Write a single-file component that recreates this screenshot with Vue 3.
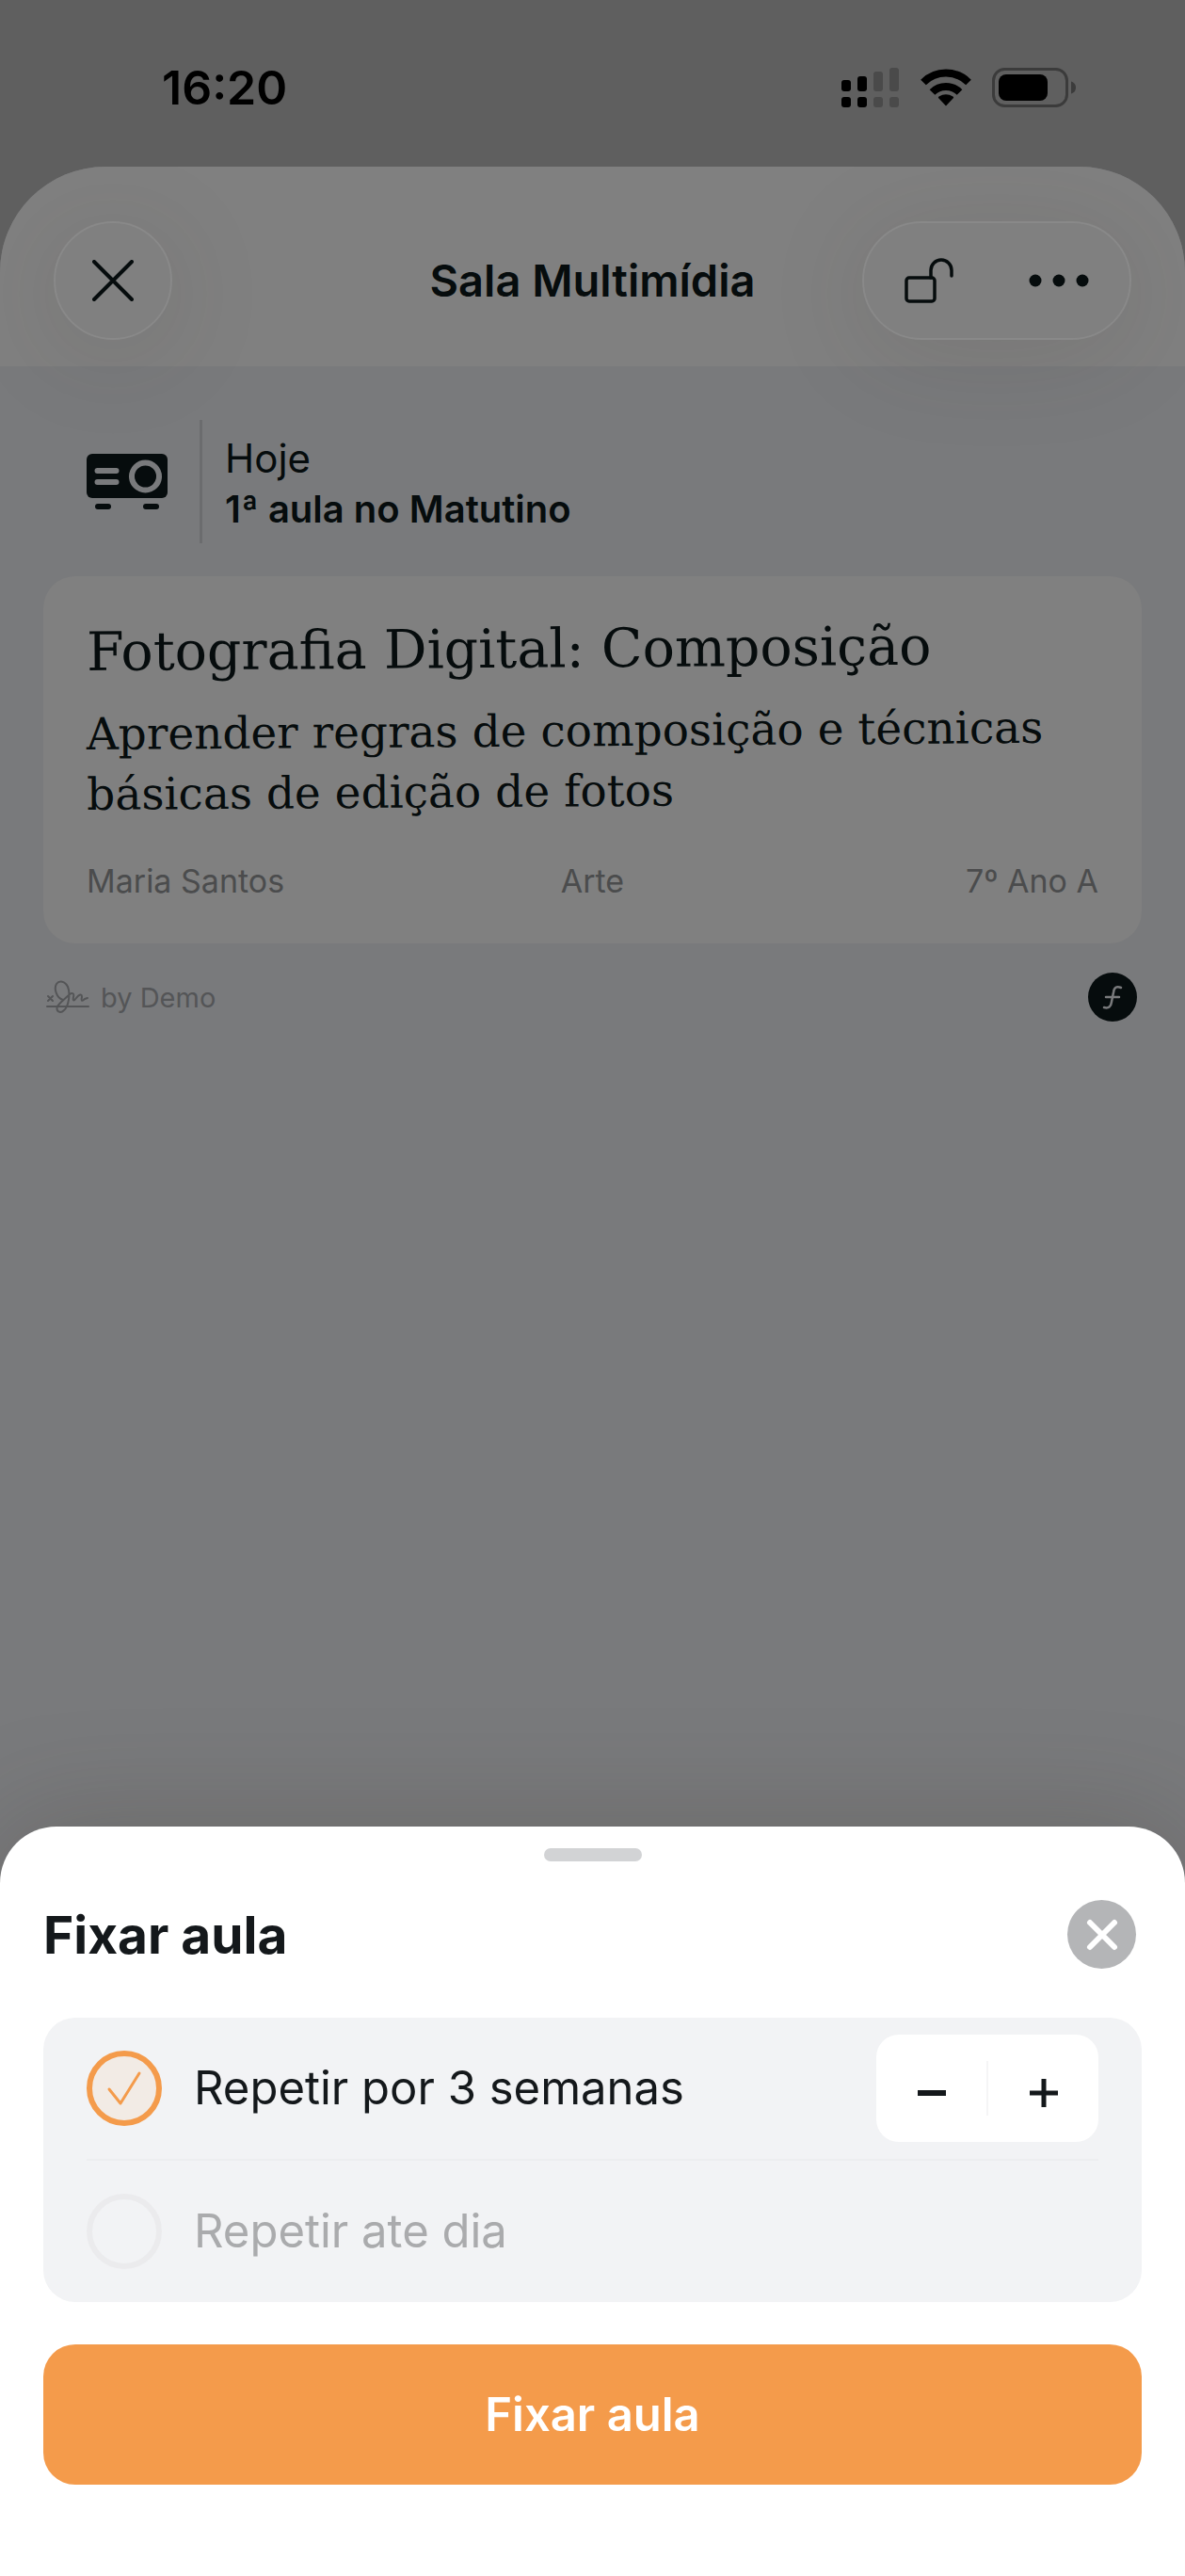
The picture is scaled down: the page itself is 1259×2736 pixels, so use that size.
<script setup>
import { ref } from 'vue'

const mode = ref('weeks')
const weeks = ref(3)
const bars = [
  { x: 0, h: 12, on: true },
  { x: 17, h: 16, on: true },
  { x: 34, h: 21, on: false },
  { x: 51, h: 25, on: false },
]
const meta = ['Maria Santos', 'Arte', '7º Ano A']

function changeWeeks(step) {
  weeks.value = Math.max(1, weeks.value + step)
}
</script>

<template>
  <div class="screen">
    <div class="status">
      <time class="clock">16:20</time>
      <div class="indicators">
        <svg width="62" height="44" viewBox="0 0 62 44" aria-hidden="true">
          <g v-for="bar in bars" :key="bar.x" :class="bar.on ? 'bar-on' : 'bar-off'">
            <rect :x="bar.x" :y="26 - bar.h" width="10" :height="bar.h" rx="3" />
            <rect :x="bar.x" y="32" width="10" height="11" rx="3" />
          </g>
        </svg>
        <svg class="wifi" width="54" height="40" viewBox="0 0 54 40" aria-hidden="true">
          <path d="M3 14.500A34 34 0 0 1 51 14.500" fill="none" stroke="#000" stroke-width="8" />
          <path d="M12.500 25A20.500 20.500 0 0 1 41.500 25" fill="none" stroke="#000" stroke-width="8" />
          <path d="M27 39.500L19 31Q18.500 30 19.500 29.500Q27 25 34.500 29.500Q35.500 30 35 31Z" />
        </svg>
        <svg class="battery" width="90" height="42" viewBox="0 0 90 42" aria-hidden="true">
          <rect x="1.500" y="1.500" width="78" height="39" rx="12" fill="none" stroke="#3b3b3b" stroke-width="3" />
          <rect x="7" y="7" width="52" height="28" rx="8" />
          <path d="M84 14.500Q89 16 89 21T84 27.500Z" fill="#3b3b3b" />
        </svg>
      </div>
    </div>

    <main class="page">
      <header class="topbar">
        <div class="side">
          <button class="glass round" type="button" aria-label="Fechar">
            <svg width="44" height="44" viewBox="0 0 44 44">
              <path d="M2 2L42 42M42 2L2 42" fill="none" stroke="#060c0d" stroke-width="4" stroke-linecap="round" />
            </svg>
          </button>
        </div>
        <h1 class="page-title">Sala Multimídia</h1>
        <div class="side end">
          <div class="glass pill">
            <button class="pill-button" type="button" aria-label="Desbloquear">
              <svg width="52" height="48" viewBox="0 0 52 48" fill="none" stroke="#060c0d" stroke-width="3.500">
                <rect x="2" y="21" width="30" height="25" rx="3" />
                <path d="M28 21V13A11 11 0 0 1 50 13V19" stroke-linecap="round" />
              </svg>
            </button>
            <button class="pill-button" type="button" aria-label="Mais opções">
              <svg width="64" height="14" viewBox="0 0 64 14" fill="#060c0d">
                <circle cx="7" cy="7" r="6.500" />
                <circle cx="32" cy="7" r="6.500" />
                <circle cx="57" cy="7" r="6.500" />
              </svg>
            </button>
          </div>
        </div>
      </header>

      <section class="content">
        <div class="when">
          <svg class="projector" width="86" height="60" viewBox="0 0 86 60" aria-hidden="true">
            <rect x="0" y="0" width="86" height="47" rx="6" fill="#060c0d" />
            <rect x="9" y="53" width="17" height="6" rx="3" fill="#060c0d" />
            <rect x="60" y="53" width="17" height="6" rx="3" fill="#060c0d" />
            <path d="M11.500 18H31.500M11.500 30H31.500" stroke="#797a7c" stroke-width="6" stroke-linecap="round" />
            <circle cx="62.500" cy="24" r="14.500" fill="none" stroke="#797a7c" stroke-width="6" />
          </svg>
          <div class="when-text">
            <span class="day">Hoje</span>
            <strong class="slot">1ª aula no Matutino</strong>
          </div>
        </div>

        <article class="lesson">
          <h2 class="lesson-title">Fotografia Digital: Composição</h2>
          <p class="lesson-text">Aprender regras de composição e técnicas básicas de edição de fotos</p>
          <div class="lesson-meta">
            <span v-for="item in meta" :key="item">{{ item }}</span>
          </div>
        </article>

        <footer class="byline">
          <div class="author">
            <svg width="46" height="36" viewBox="0 0 46 36" fill="none" stroke="#545557" stroke-width="2" stroke-linecap="round" stroke-linejoin="round" aria-hidden="true">
              <path d="M1 28H45M2 17L7 22M7 17L2 22" />
              <path d="M18 21C11 19 8 9 11 4C14 0 20 1 23 7C26 14 24 28 19 32C15 36 10 33 12 28C14 24 20 20 25 15C28 13 30 14 29 18C28 23 30 22 32 19C35 15 38 14 38 18C37 22 38 23 41 20L44 19" />
            </svg>
            <span>by Demo</span>
          </div>
          <svg width="52" height="52" viewBox="0 0 52 52" role="img" aria-label="Logotipo">
            <circle cx="26" cy="26" r="26" fill="#060c0d" />
            <path d="M35 16Q28 13 27 21L25 31Q24 39 17 37M19 26H33" fill="none" stroke="#797a7c" stroke-width="2.500" stroke-linecap="round" />
          </svg>
        </footer>
      </section>
    </main>

    <section class="sheet" aria-labelledby="sheet-title">
      <div class="handle"></div>
      <div class="sheet-head">
        <h2 id="sheet-title" class="sheet-title">Fixar aula</h2>
        <button class="dismiss" type="button" aria-label="Fechar painel">
          <svg width="36" height="36" viewBox="0 0 36 36">
            <path d="M5 5L31 31M31 5L5 31" stroke="#fff" stroke-width="6" stroke-linecap="round" />
          </svg>
        </button>
      </div>

      <div class="options">
        <div class="option">
          <label class="choice" :class="{ selected: mode === 'weeks' }">
            <span class="radio">
              <input v-model="mode" type="radio" name="repeat" value="weeks" />
              <svg v-show="mode === 'weeks'" width="38" height="38" viewBox="0 0 38 38" aria-hidden="true">
                <path d="M3 20L15 35L35 3" fill="none" stroke="#f49b4b" stroke-width="3" stroke-linecap="round" stroke-linejoin="round" />
              </svg>
            </span>
            <span>Repetir por {{ weeks }} semanas</span>
          </label>
          <div class="stepper">
            <button type="button" aria-label="Menos semanas" @click="changeWeeks(-1)">
              <svg width="30" height="30" viewBox="0 0 30 30"><path d="M0 15H30" stroke="#14181b" stroke-width="6" /></svg>
            </button>
            <button type="button" aria-label="Mais semanas" @click="changeWeeks(1)">
              <svg width="30" height="30" viewBox="0 0 30 30"><path d="M0 15H30M15 0V30" stroke="#14181b" stroke-width="5" /></svg>
            </button>
          </div>
        </div>
        <div class="option">
          <label class="choice" :class="{ selected: mode === 'date' }">
            <span class="radio">
              <input v-model="mode" type="radio" name="repeat" value="date" />
              <svg v-show="mode === 'date'" width="38" height="38" viewBox="0 0 38 38" aria-hidden="true">
                <path d="M3 20L15 35L35 3" fill="none" stroke="#f49b4b" stroke-width="3" stroke-linecap="round" stroke-linejoin="round" />
              </svg>
            </span>
            <span>Repetir ate dia</span>
          </label>
        </div>
      </div>

      <button class="submit" type="button">Fixar aula</button>
    </section>
  </div>
</template>

<style>
body {
  margin: 0;
  background: #5f5f5f;
}
</style>

<style scoped>
.screen {
  display: flex;
  flex-direction: column;
  min-height: 100vh;
  background: #5f5f5f;
  color: #060c0d;
  font-family: Inter, "Liberation Sans", sans-serif;
}

button {
  display: flex;
  align-items: center;
  justify-content: center;
  padding: 0;
  border: 0;
  background: none;
  color: inherit;
  font: inherit;
}

svg {
  display: block;
  flex: none;
}

h1,
h2,
p {
  margin: 0;
}

.status {
  display: flex;
  align-items: center;
  justify-content: space-between;
  height: 177px;
  padding: 8px 115px 0 172px;
  box-sizing: border-box;
  color: #000;
}

.clock {
  font-size: 50px;
  font-weight: 600;
}

.indicators {
  display: flex;
  align-items: center;
}

.bar-on {
  fill: #000;
}

.bar-off {
  fill: #4a4a4a;
}

.wifi {
  margin-left: 22px;
}

.battery {
  margin-left: 22px;
}

.page {
  flex: 1;
  padding-bottom: 64px;
  border-radius: 112px 112px 0 0;
  background: #797a7c;
  overflow: hidden;
}

.topbar {
  position: relative;
  display: flex;
  align-items: center;
  height: 212px;
  padding: 30px 57px 0;
  box-sizing: border-box;
  background: #808080;
}

.side {
  display: flex;
  flex: 1;
}

.end {
  justify-content: flex-end;
}

.page-title {
  font-size: 47px;
  font-weight: 600;
  line-height: 60px;
}

.glass {
  box-sizing: border-box;
  height: 126px;
  border: 2px solid rgba(255, 255, 255, 0.07);
  border-radius: 63px;
  box-shadow: 0 14px 110px rgba(60, 54, 48, 0.13);
}

.round {
  width: 126px;
}

.pill {
  display: flex;
  width: 286px;
  padding-right: 6px;
}

.pill-button {
  flex: 1;
}

.content {
  padding: 57px 46px 0;
}

.when {
  display: flex;
  align-items: center;
  padding-left: 46px;
}

.when-text {
  display: flex;
  flex-direction: column;
  justify-content: center;
  box-sizing: border-box;
  height: 131px;
  margin-left: 34px;
  padding: 4px 0 0 24px;
  border-left: 3px solid #6b6c6e;
}

.day {
  font-size: 42px;
  line-height: 54px;
}

.slot {
  font-size: 40px;
  font-weight: 600;
  line-height: 54px;
}

.lesson {
  margin-top: 35px;
  padding: 42px 46px;
  border-radius: 34px;
  background: #808080;
}

.lesson-title,
.lesson-text {
  font-family: "DejaVu Serif", serif;
  font-weight: 400;
  transform: rotate(-0.4deg);
  transform-origin: left center;
}

.lesson-title {
  font-size: 57px;
  line-height: 76px;
}

.lesson-text {
  margin-top: 18px;
  font-size: 47px;
  line-height: 64px;
}

.lesson-meta {
  display: flex;
  margin-top: 36px;
  color: #4b4c4d;
  font-size: 34px;
  line-height: 48px;
}

.lesson-meta span {
  flex: 1;
  text-align: center;
}

.lesson-meta span:first-child {
  text-align: left;
}

.lesson-meta span:last-child {
  text-align: right;
}

.byline {
  display: flex;
  align-items: center;
  justify-content: space-between;
  margin-top: 31px;
  padding: 0 5px 0 3px;
}

.author {
  display: flex;
  align-items: center;
  gap: 12px;
  color: #545557;
  font-size: 29px;
}

.sheet {
  position: relative;
  margin-top: -60px;
  padding: 23px 46px 97px;
  border-radius: 60px 60px 0 0;
  background: #fff;
  box-shadow: 0 0 120px rgba(60, 54, 48, 0.26);
}

.handle {
  width: 104px;
  height: 14px;
  margin: 0 auto;
  border-radius: 7px;
  background: #d2d3d5;
}

.sheet-head {
  display: flex;
  align-items: center;
  justify-content: space-between;
  margin-top: 41px;
  padding-right: 6px;
}

.sheet-title {
  color: #14181b;
  font-size: 55px;
  font-weight: 700;
  line-height: 64px;
}

.dismiss {
  width: 73px;
  height: 73px;
  border-radius: 50%;
  background: #b4b5b7;
}

.options {
  margin-top: 52px;
  padding: 0 46px;
  border-radius: 34px;
  background: #f2f3f5;
}

.option {
  display: flex;
  align-items: center;
  justify-content: space-between;
  height: 150px;
}

.option + .option {
  border-top: 2px solid #edeef0;
}

.choice {
  display: flex;
  align-items: center;
  gap: 34px;
  color: #aaabad;
  font-size: 49px;
  line-height: 64px;
}

.choice.selected {
  color: #14181b;
}

.radio {
  display: grid;
  place-items: center;
}

.radio > * {
  grid-area: 1 / 1;
}

.radio input {
  width: 80px;
  height: 80px;
  margin: 0;
  border: 6px solid #ebebed;
  border-radius: 50%;
  box-sizing: border-box;
  appearance: none;
}

.radio input:checked {
  border-color: #f49b4b;
  background: #f2ebe5;
}

.stepper {
  display: flex;
  width: 236px;
  height: 114px;
  align-items: center;
  border-radius: 24px;
  background: #fff;
}

.stepper button {
  flex: 1;
  box-sizing: border-box;
  height: 58px;
  padding-top: 10px;
}

.stepper button + button {
  border-left: 2px solid #f5f5f6;
}

.submit {
  width: 100%;
  height: 149px;
  margin-top: 45px;
  border-radius: 34px;
  background: #f49b4b;
  color: #fff;
  font-size: 49px;
  font-weight: 600;
}
</style>
